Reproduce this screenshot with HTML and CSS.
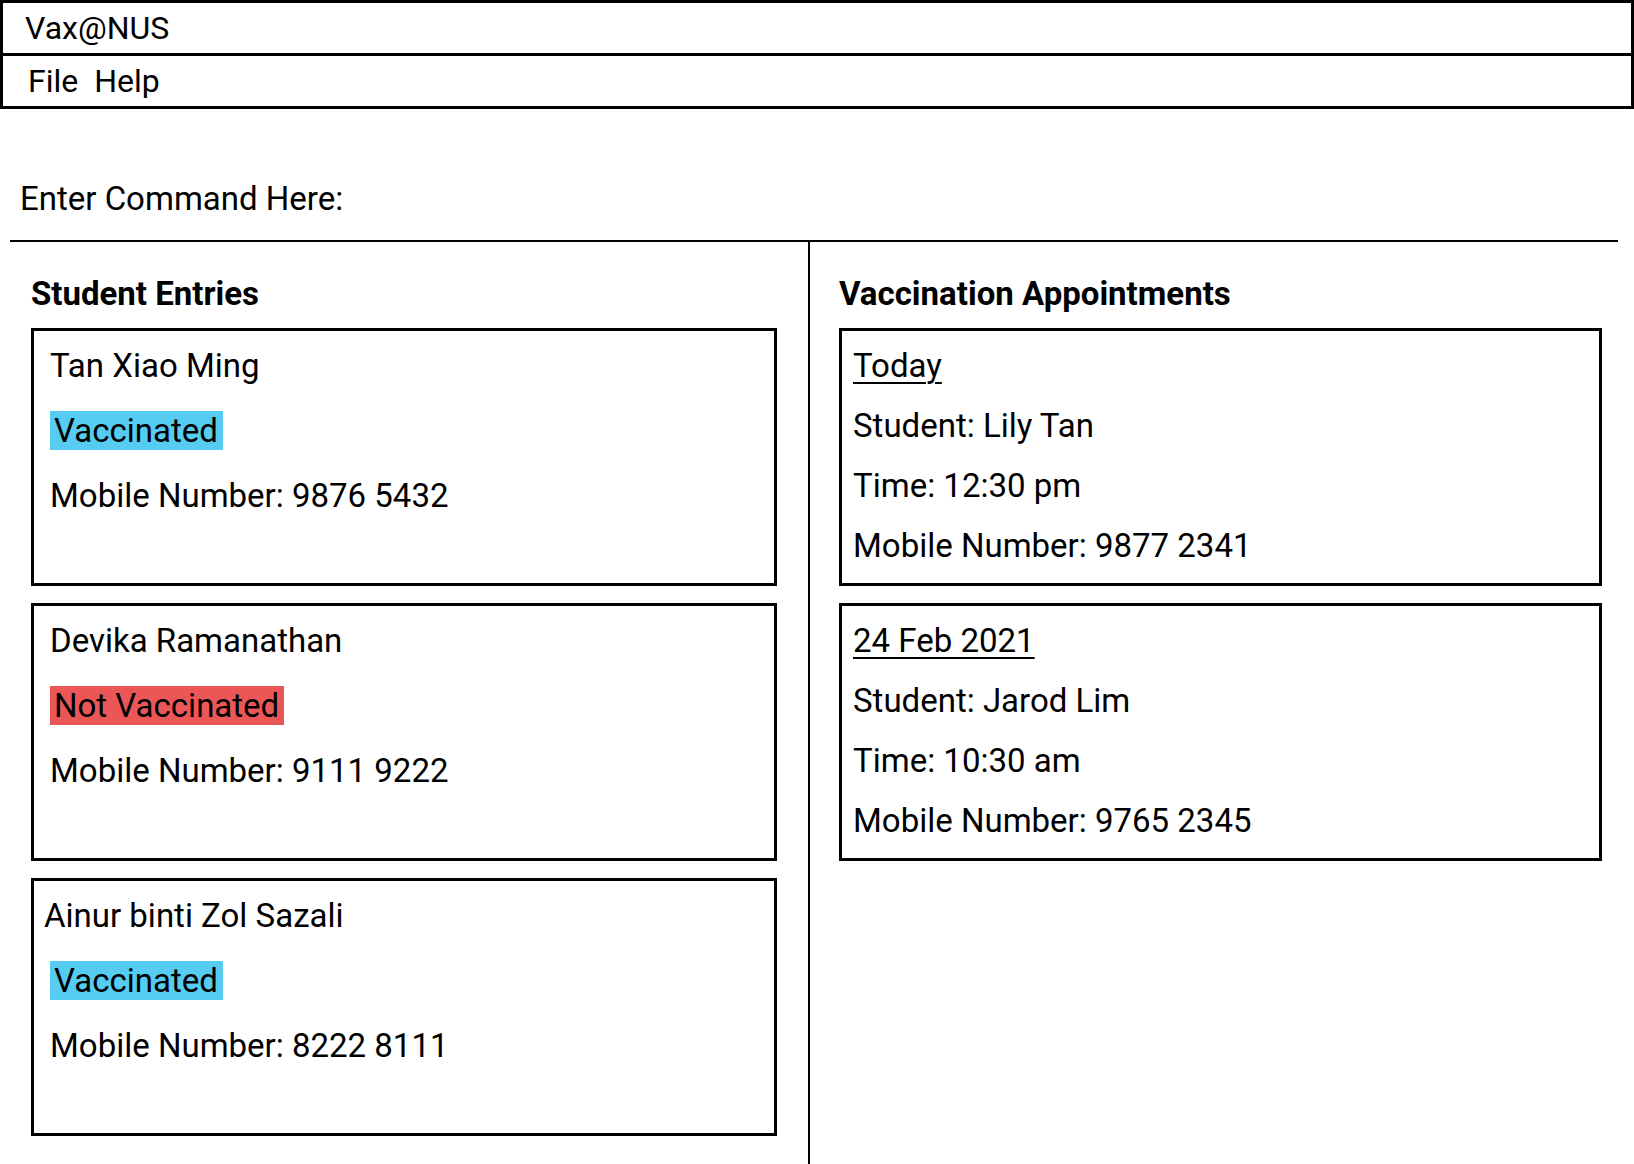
FILE: index.html
```html
<!DOCTYPE html>
<html lang="en">
<head>
<meta charset="utf-8">
<title>Vax@NUS</title>
<link rel="stylesheet" href="styles.css">
</head>
<body>
  <header class="window-bar">
    <div class="title">Vax@NUS</div>
    <nav class="menu"><span>File</span><span>Help</span></nav>
  </header>

  <div class="command">Enter Command Here:</div>

  <main class="panes">
    <section class="pane pane-left">
      <h2 class="pane-title">Student Entries</h2>
      <div class="card-list">
        <article class="card entry">
          <div class="line">Tan Xiao Ming</div>
          <div class="line"><span class="badge badge-yes">Vaccinated</span></div>
          <div class="line">Mobile Number: 9876 5432</div>
        </article>
        <article class="card entry">
          <div class="line">Devika Ramanathan</div>
          <div class="line"><span class="badge badge-no">Not Vaccinated</span></div>
          <div class="line">Mobile Number: 9111 9222</div>
        </article>
        <article class="card entry">
          <div class="line shifted">Ainur binti Zol Sazali</div>
          <div class="line"><span class="badge badge-yes">Vaccinated</span></div>
          <div class="line">Mobile Number: 8222 8111</div>
        </article>
      </div>
    </section>

    <section class="pane pane-right">
      <h2 class="pane-title">Vaccination Appointments</h2>
      <div class="card-list">
        <article class="card appt">
          <div class="line date">Today</div>
          <div class="line">Student: Lily Tan</div>
          <div class="line">Time: 12:30 pm</div>
          <div class="line">Mobile Number: 9877 2341</div>
        </article>
        <article class="card appt">
          <div class="line date">24 Feb 2021</div>
          <div class="line">Student: Jarod Lim</div>
          <div class="line">Time: 10:30 am</div>
          <div class="line">Mobile Number: 9765 2345</div>
        </article>
      </div>
    </section>
  </main>
</body>
</html>
```

FILE: styles.css
```css
* {
  box-sizing: border-box;
}

html, body {
  margin: 0;
  padding: 0;
  background: #ffffff;
}

body {
  font-family: Roboto, "Noto Sans", sans-serif;
  color: #000000;
  font-size: 33px;
  height: 100vh;
  overflow: hidden;
  display: flex;
  flex-direction: column;
}

.window-bar {
  border: 3px solid #000;
}

.title {
  height: 53px;
  line-height: 50px;
  padding-left: 22px;
  font-size: 32px;
  border-bottom: 3px solid #000;
}

.menu {
  height: 50px;
  line-height: 50px;
  padding-left: 25px;
  font-size: 32px;
  display: flex;
  gap: 16px;
}

.command {
  margin-top: 70px;
  padding-left: 20px;
  line-height: 40px;
  font-size: 33px;
}

.panes {
  margin: 21px 16px 0 10px;
  border-top: 2px solid #000;
  flex: 1;
  display: grid;
  grid-template-columns: 800px 1fr;
}

.pane-left {
  border-right: 2px solid #000;
  padding-left: 21px;
}

.pane-right {
  padding-left: 29px;
  padding-right: 16px;
}

.pane-title {
  margin: 32px 0 14px 0;
  font-size: 33px;
  font-weight: 700;
  line-height: 40px;
}

.card-list {
  display: flex;
  flex-direction: column;
  gap: 17px;
}

.card {
  border: 3px solid #000;
  height: 258px;
}

.line {
  line-height: 40px;
  white-space: nowrap;
}

.entry {
  width: 746px;
  padding: 15px 0 0 16px;
  display: flex;
  flex-direction: column;
  gap: 25px;
}

.shifted {
  margin-left: -6px;
}

.badge {
  display: inline-block;
  line-height: 39px;
  padding: 0 5px 0 4px;
}

.badge-yes {
  background: #56ccf2;
}

.badge-no {
  background: #eb5757;
}

.appt {
  padding: 15px 0 0 11px;
  display: flex;
  flex-direction: column;
  gap: 20px;
}

.date {
  text-decoration: underline;
  text-decoration-thickness: 2px;
  text-underline-offset: 5px;
}
```
